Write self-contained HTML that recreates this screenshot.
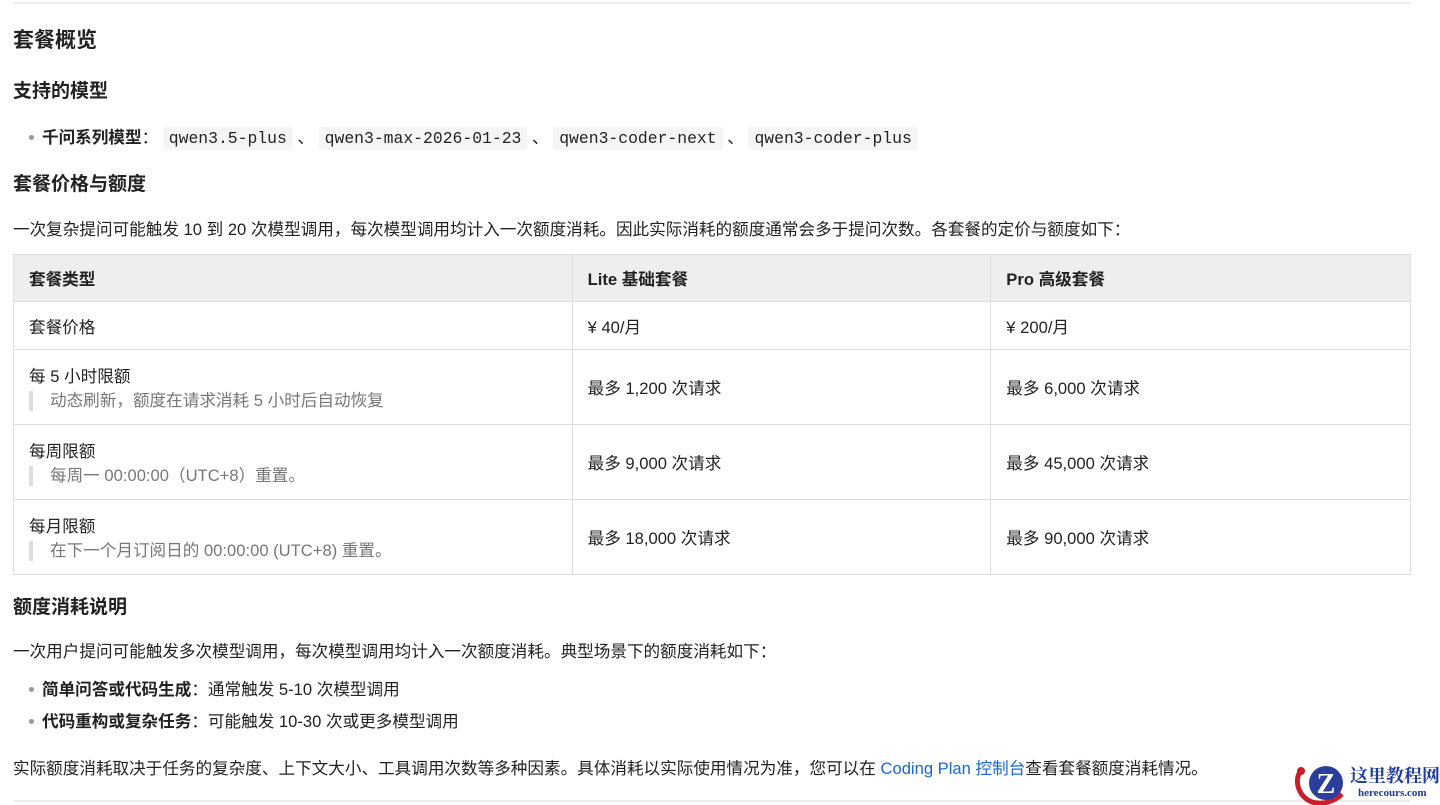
<!DOCTYPE html>
<html><head><meta charset="utf-8"><style>
*{margin:0;padding:0;box-sizing:border-box}
body{width:1440px;height:805px;background:#fff;position:relative;overflow:hidden;font-family:"Liberation Sans","Noto Sans CJK SC",sans-serif;color:#222;font-size:16.6px}
.a{position:absolute;white-space:nowrap;line-height:20px}
.h1{font-size:21px;font-weight:bold;line-height:26px}
.h2{font-size:19px;font-weight:bold;line-height:24px}
.rule{position:absolute;left:13px;width:1397px;height:2px;background:#eee}
code{font-family:"Liberation Mono",monospace;font-size:16.4px;background:#f5f5f5;padding:2px 6px;border-radius:3px;color:#222}
.dot{display:inline-block;width:5px;height:5px;border-radius:50%;background:#999;vertical-align:middle;margin:0 8px 3px 3px}
table{position:absolute;left:13px;top:254px;width:1398px;border-collapse:collapse;font-size:16.6px}
td,th{border:1px solid #dedede;padding:0 15px;text-align:left;vertical-align:middle;color:#222}
th{background:#eeeeee;height:47px;font-weight:bold}
.n{display:block;border-left:4px solid #ddd;padding-left:17px;color:#777;margin-top:4px;line-height:20px}
</style></head><body>
<div class="rule" style="top:2px"></div>
<div class="a h1" style="left:13px;top:28px">套餐概览</div>
<div class="a h2" style="left:13px;top:80px">支持的模型</div>
<div class="a" style="left:26px;top:127px;line-height:22px"><span class="dot"></span><b>千问系列模型</b>： <code>qwen3.5-plus</code> 、 <code>qwen3-max-2026-01-23</code> 、 <code>qwen3-coder-next</code> 、 <code>qwen3-coder-plus</code></div>
<div class="a h2" style="left:13px;top:173px">套餐价格与额度</div>
<div class="a" style="left:13px;top:220px">一次复杂提问可能触发 10 到 20 次模型调用，每次模型调用均计入一次额度消耗。因此实际消耗的额度通常会多于提问次数。各套餐的定价与额度如下：</div>
<table>
<colgroup><col style="width:559px"><col style="width:419px"><col style="width:420px"></colgroup>
<tr><th>套餐类型</th><th>Lite 基础套餐</th><th>Pro 高级套餐</th></tr>
<tr style="height:48px"><td>套餐价格</td><td>¥ 40/月</td><td>¥ 200/月</td></tr>
<tr style="height:75px"><td>每 5 小时限额<span class="n">动态刷新，额度在请求消耗 5 小时后自动恢复</span></td><td>最多 1,200 次请求</td><td>最多 6,000 次请求</td></tr>
<tr style="height:75px"><td>每周限额<span class="n">每周一 00:00:00（UTC+8）重置。</span></td><td>最多 9,000 次请求</td><td>最多 45,000 次请求</td></tr>
<tr style="height:75px"><td>每月限额<span class="n">在下一个月订阅日的 00:00:00 (UTC+8) 重置。</span></td><td>最多 18,000 次请求</td><td>最多 90,000 次请求</td></tr>
</table>
<div class="a h2" style="left:13px;top:596px">额度消耗说明</div>
<div class="a" style="left:13px;top:642px">一次用户提问可能触发多次模型调用，每次模型调用均计入一次额度消耗。典型场景下的额度消耗如下：</div>
<div class="a" style="left:26px;top:680px"><span class="dot"></span><b>简单问答或代码生成</b>：通常触发 5-10 次模型调用</div>
<div class="a" style="left:26px;top:712px"><span class="dot"></span><b>代码重构或复杂任务</b>：可能触发 10-30 次或更多模型调用</div>
<div class="a" style="left:13px;top:759px">实际额度消耗取决于任务的复杂度、上下文大小、工具调用次数等多种因素。具体消耗以实际使用情况为准，您可以在 <span style="color:#1a66d6">Coding Plan 控制台</span>查看套餐额度消耗情况。</div>
<div class="rule" style="top:800px"></div>
<svg style="position:absolute;left:1292px;top:762px" width="62" height="43" viewBox="0 0 62 43">
<path d="M10 8 C2 14 4 34 20 40 C30 43 42 40 50 32" stroke="#c8202a" stroke-width="5" fill="none"/>
<circle cx="9" cy="9" r="4" fill="#c8202a"/>
<circle cx="34" cy="21" r="17" fill="#2b3f9a"/>
<text x="34" y="31" text-anchor="middle" font-family="Liberation Serif" font-weight="bold" font-size="28" fill="#fff">Z</text>
</svg>
<div class="a" style="left:1350px;top:764px;font-family:'Noto Serif CJK SC',serif;font-weight:bold;font-size:18px;color:#1e3a9a;line-height:22px">这里教程网</div>
<div class="a" style="left:1358px;top:786px;font-family:'Liberation Serif',serif;font-weight:bold;font-size:11px;color:#1e3a9a;line-height:14px">herecours.com</div>
</body></html>
